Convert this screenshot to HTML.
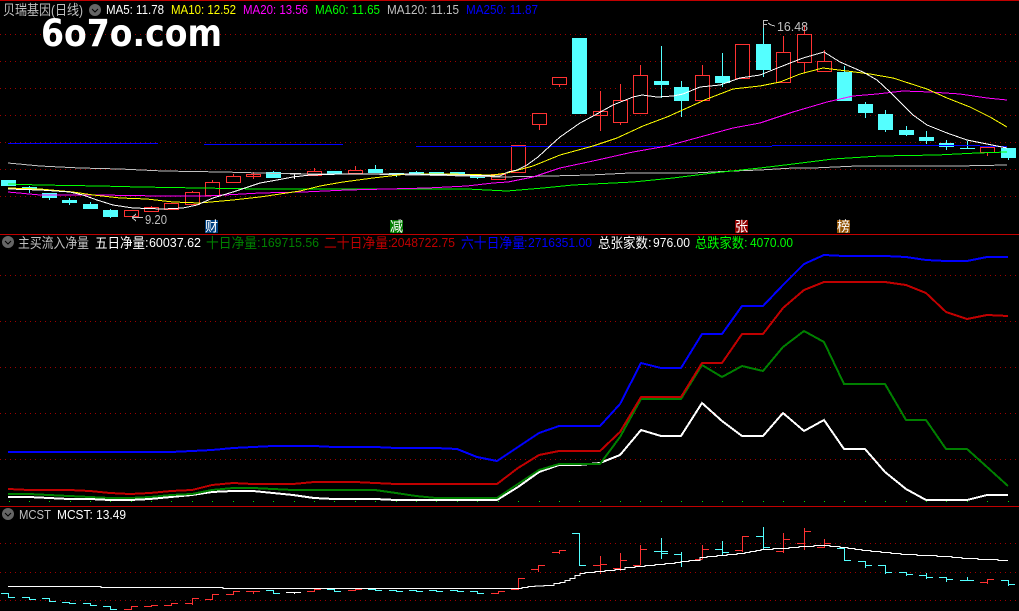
<!DOCTYPE html>
<html lang="zh"><head><meta charset="utf-8"><title>贝瑞基因(日线)</title>
<style>
html,body{margin:0;padding:0;background:#000;width:1019px;height:611px;overflow:hidden}
svg{display:block}
text{font-family:"Liberation Sans","WenQuanYi Zen Hei","Noto Sans CJK SC",sans-serif;font-size:13px}
.c{font-size:14px}
.crisp *{shape-rendering:crispEdges}
</style></head><body>
<svg width="1019" height="611" viewBox="0 0 1019 611" xmlns="http://www.w3.org/2000/svg">
<rect width="1019" height="611" fill="#000"/>
<g class="crisp">
<!-- separators -->
<rect x="0" y="0" width="1019" height="1" fill="#c00000"/>
<rect x="0" y="234" width="1019" height="1" fill="#c00000"/>
<rect x="0" y="506" width="1019" height="1" fill="#c00000"/>
<!-- grid -->
<path d="M0 34.5H1019M0 61.5H1019M0 88.5H1019M0 115.5H1019M0 142.5H1019M0 169.5H1019M0 196.5H1019M0 275.5H1019M0 321.5H1019M0 367.5H1019M0 413.5H1019M0 459.5H1019M0 543.5H1019M0 572.5H1019M0 600.5H1019" stroke="#a00000" stroke-width="1" stroke-dasharray="1 4" fill="none"/>

<!-- cyan wicks -->
<path d="M29.5 186V193M49.5 198V200M69.5 198V205M90.5 202V204M110.5 209V218M273.5 171V172M375.5 165V169M396.5 175V177M416.5 171V172M477.5 178V179M661.5 46V98M681.5 81V117M722.5 53V87M763.5 20V77M844.5 66V72M865.5 102V118M885.5 110V132M906.5 126V136M926.5 131V144M946.5 140V150M967.5 141V149M1008.5 158V160" stroke="#54ffff" stroke-width="1" fill="none"/>
<!-- cyan bodies -->
<path fill="#54ffff" d="M1 180h15v6h-15zM22 187h15v3h-15zM42 193h15v5h-15zM62 200h15v3h-15zM83 204h15v5h-15zM103 210h15v7h-15zM266 172h15v6h-15zM327 171h15v3h-15zM368 169h15v4h-15zM389 173h15v2h-15zM409 172h15v2h-15zM429 172h15v2h-15zM450 172h15v2h-15zM470 175h15v3h-15zM572 38h15v76h-15zM654 81h15v4h-15zM674 87h15v14h-15zM715 76h15v7h-15zM756 44h15v26h-15zM837 72h15v29h-15zM858 104h15v9h-15zM878 114h15v16h-15zM899 130h15v5h-15zM919 137h15v4h-15zM939 143h15v4h-15zM960 148h15v1h-15zM1001 148h15v10h-15z"/>
<!-- white doji -->
<path d="M294.5 173V179M286 173.5H301" stroke="#fff" fill="none"/>
<!-- red wicks -->
<path d="M151.5 206V207M192.5 191V205M212.5 180V182M233.5 174V176M314.5 168V171M355.5 166V170M539.5 124V130M559.5 84V87M620.5 84V125M640.5 65V75M702.5 65V75M783.5 36V52M804.5 25V73M824.5 50V61M987.5 152V156" stroke="#ff3232" stroke-width="1" fill="none"/>
<!-- red hollow bodies -->
<g fill="#000" stroke="#ff3232" stroke-width="1">
<rect x="124.5" y="210.5" width="14" height="6"/>
<rect x="144.5" y="207.5" width="14" height="4"/>
<rect x="164.5" y="203.5" width="14" height="6"/>
<rect x="185.5" y="192.5" width="14" height="12"/>
<rect x="205.5" y="182.5" width="14" height="13"/>
<rect x="226.5" y="176.5" width="14" height="6"/>
<rect x="246.5" y="174.5" width="14" height="2"/>
<rect x="307.5" y="171.5" width="14" height="4"/>
<rect x="348.5" y="170.5" width="14" height="3"/>
<rect x="491.5" y="174.5" width="14" height="5"/>
<rect x="511.5" y="145.5" width="14" height="27"/>
<rect x="532.5" y="113.5" width="14" height="11"/>
<rect x="552.5" y="77.5" width="14" height="7"/>
<rect x="593.5" y="111.5" width="14" height="4"/>
<rect x="613.5" y="100.5" width="14" height="22"/>
<rect x="633.5" y="75.5" width="14" height="38"/>
<rect x="695.5" y="75.5" width="14" height="25"/>
<rect x="735.5" y="44.5" width="14" height="34"/>
<rect x="776.5" y="52.5" width="14" height="30"/>
<rect x="797.5" y="34.5" width="14" height="28"/>
<rect x="817.5" y="61.5" width="14" height="10"/>
<rect x="980.5" y="147.5" width="14" height="5"/>
</g>
<path d="M253.5 172V179M600.5 91V131" stroke="#ff3232" fill="none"/>

<!-- MAs -->
<g fill="#0000ff">
<rect x="8" y="143" width="150" height="1"/>
<rect x="204" y="144" width="139" height="1"/>
<rect x="416" y="146" width="356" height="1"/>
<rect x="772" y="145" width="208" height="1"/>
<rect x="980" y="146" width="27" height="1"/>
</g>
<g fill="none" stroke-width="1">
<polyline stroke="#c0c0c0" points="8,163 40,166 80,168 120,169 163,171 223,172 260,173 300,174 367,174 467,176 500,177 550,176 590,175 630,173 693,173 733,171 760,170 793,168 813,168 857,166 957,166 1007,165"/>
<polyline stroke="#00ff00" stroke-width="1" points="8,184 40,185 100,186 140,187 260,189 360,189 467,189 507,191 543,188 573,185 633,182 673,178 713,173 760,168 793,164 833,159 880,156 937,155 977,153 1007,152"/>
<polyline stroke="#ff00ff" points="8,192 40,195 100,195 160,196 207,196 260,193 303,192 347,190 427,188 467,186 493,183 508,182 533,177 560,168 593,161 633,152 667,146 700,137 733,128 760,123 793,112 827,102 853,96 877,94 903,91 930,92 960,94 987,98 1007,100"/>
<polyline stroke="#ffff00" points="8,188 40,189 73,192 93,195 120,198 147,199 173,202 200,203 233,200 260,197 280,194 300,191 320,186 343,182 373,178 407,174 447,174 493,175 507,173 533,166 560,155 593,146 617,138 643,126 667,117 687,108 707,99 733,89 760,86 780,82 800,74 823,68 847,71 870,74 893,78 927,89 947,98 970,107 990,117 1007,127"/>
<polyline stroke="#ffffff" points="8,189 40,190 70,192 83,195 97,200 113,205 133,208 163,209 183,208 197,205 213,198 233,192 260,183 277,180 293,177 310,175 343,174 367,174 407,174 460,175 500,176 508,172 517,170 527,165 538,157 550,146 560,137 580,123 595,115 613,105 633,97 642,95 657,97 673,96 683,94 700,87 720,85 740,78 760,75 780,67 803,58 824,52 840,62 863,72 877,80 890,92 913,115 927,125 947,133 967,140 987,144 1007,148"/>
</g>

<!-- tags -->
<rect x="205" y="220" width="13" height="13" fill="#004080"/>
<rect x="390" y="220" width="13" height="13" fill="#007c00"/>
<rect x="735" y="220" width="13" height="13" fill="#900000"/>
<rect x="837" y="220" width="13" height="13" fill="#905000"/>

<!-- Panel 2 -->
<g fill="none" stroke-width="2">
<polyline stroke="#ffffff" points="8,497 29,497 49,498 69,499 90,499 110,500 130,500 150,499 171,497 192,495 212,492 233,491 253,491 273,493 293,495 314,498 334,499 355,499 375,499 396,500 416,500 436,500 457,500 477,500 497,500 518,487 539,472 559,465 579,465 600,463 620,455 641,430 661,436 681,436 702,403 722,421 742,436 763,436 783,413 804,431 824,420 844,449 865,449 885,472 906,489 926,500 946,500 967,500 987,495 1008,495"/>
<polyline stroke="#008000" points="8,494 29,494 49,495 69,496 90,497 110,498 130,498 150,497 171,495 192,494 212,490 233,488 253,488 273,489 293,490 314,490 334,490 355,490 375,490 396,493 416,496 436,498 457,498 477,498 497,498 518,484 539,470 559,464 579,464 600,464 620,437 641,399 661,399 681,399 702,365 722,377 742,366 763,371 783,347 804,331 824,342 844,384 865,384 885,384 906,420 926,420 946,449 967,449 987,467 1008,486"/>
<polyline stroke="#c00000" points="8,489 29,490 49,490 69,490 90,491 110,493 130,494 150,493 171,491 192,490 212,485 233,483 253,484 273,484 293,484 314,482 334,482 355,482 375,483 396,484 416,484 436,484 457,484 477,484 497,484 518,468 539,455 559,451 579,451 600,451 620,432 641,397 661,397 681,397 702,363 722,363 742,334 763,334 783,308 804,290 824,282 844,282 865,282 885,282 906,285 926,293 946,312 967,319 987,315 1008,316"/>
<polyline stroke="#0000ff" points="8,452 29,452 49,452 69,452 90,452 110,452 130,452 150,452 171,452 192,451 212,450 233,448 253,447 273,446 293,446 314,446 334,447 355,447 375,447 396,448 416,448 436,448 457,449 477,457 497,461 518,447 539,433 559,426 579,426 600,426 620,404 641,363 661,368 681,368 702,334 722,334 742,306 763,306 783,285 804,264 824,255 844,256 865,256 885,256 906,257 926,260 946,261 967,261 987,257 1008,257"/>
</g>
<!-- green dots -->
<path stroke="#00e000" stroke-width="1" fill="none" d="M9 501.5h1M29 501.5h1M49 501.5h1M70 501.5h1M90 501.5h1M110 501.5h1M131 501.5h1M151 501.5h1M171 501.5h1M192 501.5h1M212 501.5h1M233 501.5h1M253 501.5h1M273 501.5h1M294 501.5h1M314 501.5h1M334 501.5h1M355 501.5h1M375 501.5h1M396 501.5h1M416 501.5h1M436 501.5h1M457 501.5h1M477 501.5h1M498 501.5h1M518 501.5h1M539 501.5h1M559 501.5h1M579 501.5h1M600 501.5h1M620 501.5h1M640 501.5h1M661 501.5h1M681 501.5h1M702 501.5h1M722 501.5h1M742 501.5h1M763 501.5h1M783 501.5h1M804 501.5h1M824 501.5h1M844 501.5h1M865 501.5h1M885 501.5h1M906 501.5h1M926 501.5h1M946 501.5h1M967 501.5h1M987 501.5h1M1008 501.5h1"/>

<!-- Panel 3 -->
<g fill="none" stroke-width="1">
<path stroke="#54ffff" d="M1 593.5H8.5V597.5H15M22 597.5H29.5V599.5H36M42 598.5H49.5V601.5H56M62 602.5H69.5V603.5H76M83 603.5H90.5V605.5H97M103 606.5H110.5V609.5H117M266 590.5H273.5V593.5H280M327 589.5H334.5V591.5H341M368 589.5H375.5V590.5H382M389 590.5H396.5V591.5H403M409 590.5H416.5V591.5H423M429 590.5H436.5V591.5H443M450 590.5H457.5V591.5H464M470 591.5H477.5V593.5H484M572 533.5H579.5V565.5H586M654 551.5H668M661.5 538V559M661.5 553.5H668M674 554.5H681M681.5 552V567M681.5 561.5H688M715 549.5H722.5M722.5 541V555M722.5 552.5H729M756 536.5H763.5M763.5 527V550M763.5 547.5H770M837 548.5H844.5V560.5H851M858 561.5H865.5V568M865.5 565.5H872M878 565.5H885.5V574M885.5 572.5H892M899 572.5H906.5V576M906.5 574.5H913M919 575.5H926.5M926.5 573V579M926.5 577.5H933M939 577.5H946.5V582M946.5 579.5H953M960 580.5H974M967.5 577V580M1001 580.5H1008.5V586M1008.5 584.5H1015"/>
<path stroke="#ff3232" d="M124 609.5H131.5V606.5H138M144 606.5H151.5V605.5H158M164 605.5H171.5V603.5H178M185 603.5H192.5V605M192.5 603V598.5H199M205 599.5H212.5V594.5H219M226 594.5H233.5V591.5H240M246 591.5H260M253.5 591V594M307 591.5H314.5V589.5H321M348 590.5H355.5V589.5H362M491 593.5H498.5V591.5H505M511 589.5H518.5V578.5H525M531 569.5H538.5V572M538.5 569V565.5H545M552 552.5H559.5V554M559.5 552V550.5H566M593 565.5H600.5M600.5 556V574M600.5 564.5H607M613 568.5H620.5M620.5 553V571M620.5 560.5H627M633 565.5H640.5M640.5 545V565M640.5 549.5H647M695 559.5H702.5M702.5 545V559M702.5 549.5H709M735 550.5H742.5V552M742.5 550V536.5H749M776 551.5H783.5M783.5 533V553M783.5 539.5H790M797 543.5H804.5M804.5 528V550M804.5 531.5H811M817 547.5H824.5M824.5 539V548M824.5 543.5H831M980 582.5H987.5V584M987.5 582V579.5H994"/>
<path stroke="#ffffff" d="M286 592.5H301M294.5 592V594"/>
<path stroke="#ffffff" d="M8 586.5H101V587.5H223V588.5H522V587.5H528V586.5H535V586H544V585.5H554V583.5H560V582.5H565V580.5H570V578.5H575V575.5H580V573.5H585V572.5H595V571.5H605V570.5H615V569.5H625V567.5H635V566.5H645V565.5H655V564.5H665V563.5H675V562.5H681V561.5H689V560.5H700V557.5H707V556.5H717V555.5H727V554.5H737V553.5H745V552.5H750V551.5H756V550.5H761V549.5H773V548.5H789V547.5H799V546.5H814V545.5H830V546.5H840V547.5H848V548.5H855V549.5H862V550.5H871V551.5H881V552.5H891V553.5H901V554.5H917V555.5H937V556.5H952V557.5H962V558.5H978V559.5H998V560.5H1008"/>
</g>

<!-- chart flag marks -->
<path d="M132 217.5H143M132 217.5L136 214M132 217.5L136 221" stroke="#c0c0c0" fill="none"/>
<path d="M763.5 20.5H768M763.5 24.5H767M763.5 20V28M768 23L771 25L775 26" stroke="#c0c0c0" fill="none"/>
</g>

<!-- chart text -->
<text x="145" y="224" fill="#c0c0c0" textLength="22" lengthAdjust="spacingAndGlyphs">9.20</text>
<text x="777" y="31" fill="#c0c0c0" textLength="31" lengthAdjust="spacingAndGlyphs">16.48</text>

<text x="205" y="231.5" class="c" fill="#fff" textLength="13" lengthAdjust="spacingAndGlyphs">财</text>
<text x="390" y="231.5" class="c" fill="#fff" textLength="13" lengthAdjust="spacingAndGlyphs">减</text>
<text x="735" y="231.5" class="c" fill="#fff" textLength="13" lengthAdjust="spacingAndGlyphs">张</text>
<text x="837" y="231.5" class="c" fill="#fff" textLength="13" lengthAdjust="spacingAndGlyphs">榜</text>

<!-- logo -->
<text x="41" y="46" fill="#fff" style="font-family:'DejaVu Sans',sans-serif;font-weight:700;font-size:37px" textLength="181" lengthAdjust="spacingAndGlyphs">6o7o.com</text>

<!-- header 1 -->
<text x="3" y="15" class="c" fill="#c0c0c0" textLength="80" lengthAdjust="spacingAndGlyphs">贝瑞基因(日线)</text>
<circle cx="95" cy="10" r="6" fill="#666"/>
<path d="M92 9L95 12L98 9" stroke="#000" fill="none"/>
<text x="106" y="14" fill="#fff" textLength="58" lengthAdjust="spacingAndGlyphs">MA5: 11.78</text>
<text x="171" y="14" fill="#ffff00" textLength="65" lengthAdjust="spacingAndGlyphs">MA10: 12.52</text>
<text x="243" y="14" fill="#ff00ff" textLength="65" lengthAdjust="spacingAndGlyphs">MA20: 13.56</text>
<text x="315" y="14" fill="#00ff00" textLength="65" lengthAdjust="spacingAndGlyphs">MA60: 11.65</text>
<text x="387" y="14" fill="#c0c0c0" textLength="72" lengthAdjust="spacingAndGlyphs">MA120: 11.15</text>
<text x="466" y="14" fill="#0000ff" textLength="72" lengthAdjust="spacingAndGlyphs">MA250: 11.87</text>

<!-- header 2 -->
<circle cx="8" cy="242" r="6" fill="#666"/>
<path d="M5 241L8 244L11 241" stroke="#000" fill="none"/>
<text x="18" y="248" class="c" fill="#c0c0c0" textLength="71" lengthAdjust="spacingAndGlyphs">主买流入净量</text>
<text x="95" y="248" class="c" fill="#fff" textLength="50" lengthAdjust="spacingAndGlyphs">五日净量</text>
<text x="145" y="247" fill="#fff">:</text>
<text x="149" y="247" fill="#fff" textLength="52" lengthAdjust="spacingAndGlyphs">60037.62</text>
<text x="206" y="248" class="c" fill="#008000" textLength="51" lengthAdjust="spacingAndGlyphs">十日净量</text>
<text x="257" y="247" fill="#008000">:</text>
<text x="261" y="247" fill="#008000" textLength="58" lengthAdjust="spacingAndGlyphs">169715.56</text>
<text x="324" y="248" class="c" fill="#c00000" textLength="64" lengthAdjust="spacingAndGlyphs">二十日净量</text>
<text x="388" y="247" fill="#c00000">:</text>
<text x="391" y="247" fill="#c00000" textLength="64" lengthAdjust="spacingAndGlyphs">2048722.75</text>
<text x="461" y="248" class="c" fill="#0000ff" textLength="64" lengthAdjust="spacingAndGlyphs">六十日净量</text>
<text x="524" y="247" fill="#0000ff">:</text>
<text x="528" y="247" fill="#0000ff" textLength="64" lengthAdjust="spacingAndGlyphs">2716351.00</text>
<text x="598" y="248" class="c" fill="#fff" textLength="50" lengthAdjust="spacingAndGlyphs">总张家数</text>
<text x="648" y="247" fill="#fff">:</text>
<text x="653" y="247" fill="#fff" textLength="37" lengthAdjust="spacingAndGlyphs">976.00</text>
<text x="695" y="248" class="c" fill="#00ff00" textLength="49" lengthAdjust="spacingAndGlyphs">总跌家数</text>
<text x="744" y="247" fill="#00ff00">:</text>
<text x="750" y="247" fill="#00ff00" textLength="43" lengthAdjust="spacingAndGlyphs">4070.00</text>

<!-- header 3 -->
<circle cx="8" cy="514" r="6" fill="#666"/>
<path d="M5 513L8 516L11 513" stroke="#000" fill="none"/>
<text x="19" y="519" fill="#c0c0c0" textLength="32" lengthAdjust="spacingAndGlyphs">MCST</text>
<text x="57" y="519" fill="#fff" textLength="69" lengthAdjust="spacingAndGlyphs">MCST: 13.49</text>
</svg>
</body></html>
